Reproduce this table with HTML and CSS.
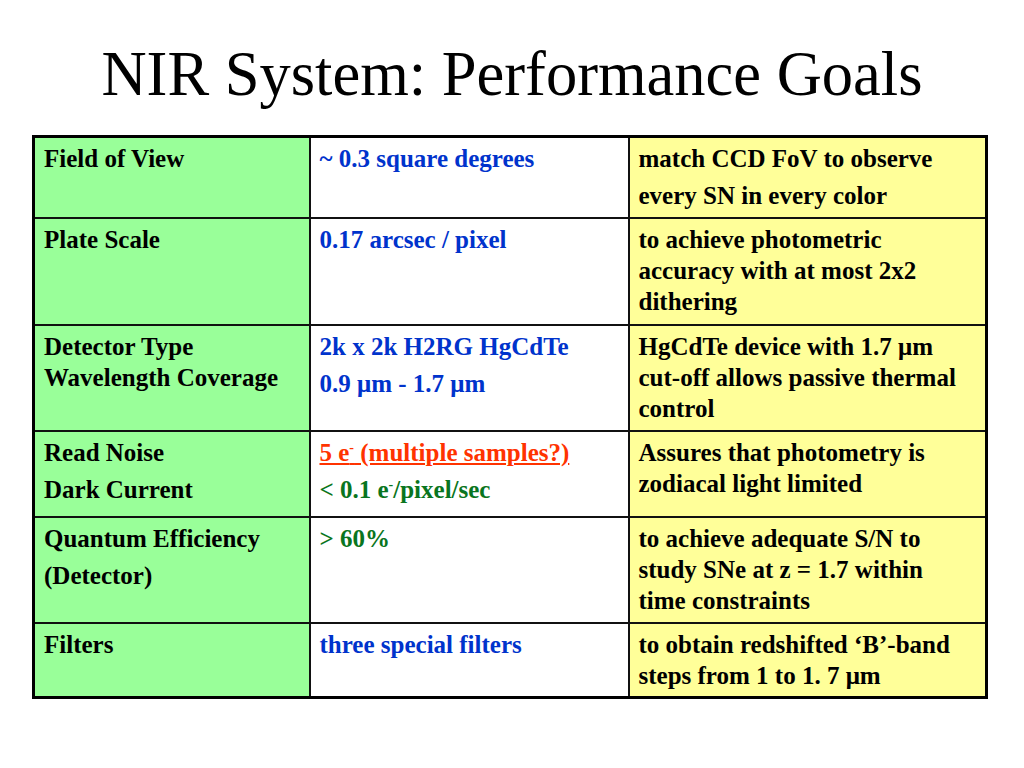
FILE: index.html
```html
<!DOCTYPE html>
<html>
<head>
<meta charset="utf-8">
<link rel="stylesheet" href="styles.css">
</head>
<body>
<h1 class="title">NIR System: Performance Goals</h1>
<table class="goals">
  <colgroup>
    <col class="c1"><col class="c2"><col class="c3">
  </colgroup>
  <tr class="r1">
    <td class="label">Field of View</td>
    <td class="value blue">~ 0.3 square degrees</td>
    <td class="note"><div>match CCD FoV to observe</div><div class="para">every SN in every color</div></td>
  </tr>
  <tr class="r2">
    <td class="label">Plate Scale</td>
    <td class="value blue">0.17 arcsec / pixel</td>
    <td class="note">to achieve photometric accuracy with at most 2x2 dithering</td>
  </tr>
  <tr class="r3">
    <td class="label">Detector Type<br>Wavelength Coverage</td>
    <td class="value blue"><div>2k x 2k H2RG HgCdTe</div><div class="para">0.9 μm - 1.7 μm</div></td>
    <td class="note">HgCdTe device with 1.7 μm cut-off allows passive thermal control</td>
  </tr>
  <tr class="r4">
    <td class="label"><div>Read Noise</div><div class="para">Dark Current</div></td>
    <td class="value"><div class="red">5 e<sup>-</sup> (multiple samples?)</div><div class="para green">&lt; 0.1 e<sup>-</sup>/pixel/sec</div></td>
    <td class="note">Assures that photometry is zodiacal light limited</td>
  </tr>
  <tr class="r5">
    <td class="label"><div>Quantum Efficiency</div><div class="para">(Detector)</div></td>
    <td class="value green">&gt; 60%</td>
    <td class="note">to achieve adequate S/N to study SNe at z = 1.7 within time constraints</td>
  </tr>
  <tr class="r6">
    <td class="label">Filters</td>
    <td class="value blue">three special filters</td>
    <td class="note">to obtain redshifted ‘B’-band steps from 1 to 1. 7 μm</td>
  </tr>
</table>
</body>
</html>
```

FILE: styles.css
```css
html, body {
  margin: 0;
  padding: 0;
  background: #ffffff;
}
body {
  font-family: "Liberation Serif", "Times New Roman", serif;
  color: #000;
}
.title {
  margin: 0;
  height: 135px;
  font-weight: normal;
  font-size: 62.5px;
  line-height: 148px;
  text-align: center;
}
.goals {
  margin-left: 32px;
  width: 953px;
  border-collapse: collapse;
  border: 3px solid #000;
  table-layout: fixed;
}
.c1 { width: 276px; }
.c2 { width: 319px; }
.c3 { width: 358px; }
.goals td {
  border: 2px solid #111;
  vertical-align: top;
  padding: 5px 8px 0 9px;
  font-family: "Liberation Serif", "Times New Roman", serif;
  font-weight: bold;
  font-size: 25px;
  line-height: 31px;
}
.goals td.note { padding-right: 16px; }
.r1 { height: 81px; }
.r2 { height: 107px; }
.r3 { height: 106px; }
.r4 { height: 86px; }
.r5 { height: 106px; }
.r6 { height: 75px; }
.label { background: #99ff99; }
.value { background: #ffffff; }
.note { background: #ffff99; }
.para { margin-top: 6px; }
.blue { color: #0033cc; }
.green { color: #097520; }
.red { color: #ff3300; text-decoration: underline; }
sup {
  font-size: 14px;
  line-height: 0;
  vertical-align: 9px;
}
```
